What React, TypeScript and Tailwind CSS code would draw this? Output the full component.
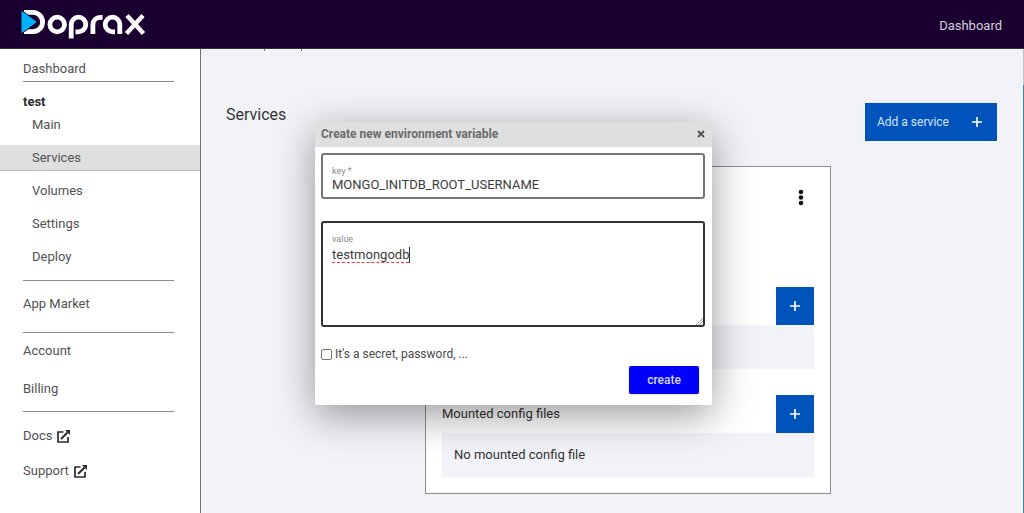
import { useState } from 'react'
import type { ReactNode } from 'react'

interface NavItem {
  label: string
  active?: boolean
}

const projectItems: NavItem[] = [
  { label: 'Main' },
  { label: 'Services', active: true },
  { label: 'Volumes' },
  { label: 'Settings' },
  { label: 'Deploy' },
]

function Logo() {
  return (
    <svg width="126" height="32" viewBox="0 0 126 32" role="img" aria-label="Doprax" className="block">
      <g fill="none" stroke="#fff" strokeWidth="4.800">
        <path d="M3 2.400h9a9.600 9.600 0 0 1 0 19.200H3" />
        <circle cx="36.200" cy="14.500" r="7.300" />
        <path d="M50.200 28.500V14.500a7.300 7.300 0 1 1 7.300 7.300h-3" />
        <path d="M71.900 24V14.500a7.200 7.200 0 0 1 7.200-7.200h2.500" />
        <path d="M94 21.800h-2.500a7.300 7.300 0 1 1 7.300-7.300V24" />
        <path d="M106 5.500l16.500 18M122 5.500l-16.500 18" strokeWidth="4.400" />
      </g>
      <path d="M0 0v24l16.500-12z" fill="#00b2ff" stroke="#1a0030" strokeWidth="1" />
    </svg>
  )
}

function Plus() {
  return (
    <svg width="10" height="10" viewBox="0 0 10 10" aria-hidden="true">
      <path d="M5 0v10M0 5h10" stroke="#fff" strokeWidth="1.600" />
    </svg>
  )
}

function ExternalIcon() {
  return (
    <svg width="13" height="13" viewBox="0 0 13 13" fill="none" stroke="#2b2b2b" aria-hidden="true">
      <path d="M6.500 2H1v10h10V7" strokeWidth="1.700" />
      <path d="M4 9l6.500-6.500" strokeWidth="2" />
      <path d="M8 0h5v5z" fill="#2b2b2b" stroke="none" />
    </svg>
  )
}

function SideLink({ children }: { children: ReactNode }) {
  return (
    <a href="#" className="flex items-center gap-[5px] text-[#525252]">
      {children}
    </a>
  )
}

function AddButton({ label }: { label: string }) {
  return (
    <button type="button" aria-label={label} className="flex size-[38px] items-center justify-center bg-[#0053ba]">
      <Plus />
    </button>
  )
}

function EnvDialog() {
  const [key, setKey] = useState('MONGO_INITDB_ROOT_USERNAME')
  const [value, setValue] = useState('testmongodb')
  const [secret, setSecret] = useState(false)

  return (
    <div
      role="dialog"
      aria-labelledby="env-title"
      className="absolute top-[122px] left-[315px] w-[397px] rounded-xs bg-white pb-[11px] shadow-[0_10px_40px_rgba(0,0,0,0.4)]"
    >
      <div className="flex h-[25px] items-center justify-between bg-[#dfdfdf] pr-[7px] pb-px pl-1.5 font-bold text-[#6b6b6b]">
        <h2 id="env-title" className="text-xs">
          Create new environment variable
        </h2>
        <button type="button" aria-label="Close">
          <svg width="8" height="8" viewBox="0 0 8 8" aria-hidden="true">
            <path d="M1 1l6 6M7 1l-6 6" stroke="#555" strokeWidth="2" />
          </svg>
        </button>
      </div>
      <form className="flex flex-col pt-1.5 pr-[7px] pl-1.5" onSubmit={(e) => e.preventDefault()}>
        <div className="flex h-[46px] flex-col rounded-[3px] border-2 border-[#767676] px-[9px] pt-2.5">
          <label htmlFor="env-key" className="text-[9px] leading-3 text-[#8a8a8a]">
            key *
          </label>
          <input
            id="env-key"
            value={key}
            onChange={(e) => setKey(e.target.value)}
            className="h-4 text-[13px] leading-4 text-[#3c3c3c] outline-none"
          />
        </div>
        <div className="relative mt-[22px] flex h-[106px] flex-col rounded-[3px] border-2 border-[#333] px-[9px] pt-2.5">
          <label htmlFor="env-value" className="text-[9px] leading-3 text-[#8a8a8a]">
            value
          </label>
          <div className="relative grow pt-0.5">
            <textarea
              id="env-value"
              value={value}
              onChange={(e) => setValue(e.target.value)}
              spellCheck={false}
              className="block size-full resize-none text-[13px] leading-4 text-[#3c3c3c] outline-none"
            />
            {/* spelling mark and caret */}
            <span className="pointer-events-none absolute top-0.5 left-0 h-4 w-[77px] border-b border-dashed border-red-500" />
            <span className="pointer-events-none absolute top-0.5 left-[77px] h-4 w-px bg-[#333]" />
          </div>
          <svg width="7" height="7" viewBox="0 0 7 7" className="absolute right-0 bottom-0" aria-hidden="true">
            <path d="M0 7l7-7M3 7l4-4" stroke="#999" />
          </svg>
        </div>
        <label className="mt-[19px] flex items-center gap-[3px] text-xs leading-4 text-[#4a4a4a]">
          <input
            type="checkbox"
            checked={secret}
            onChange={(e) => setSecret(e.target.checked)}
            className="size-[11px] appearance-none rounded-[2px] border border-[#767676] bg-white checked:bg-blue-600"
          />
          It's a secret, password, ...
        </label>
        <button
          type="submit"
          className="mt-1 mr-1.5 h-7 w-[70px] self-end rounded-[2px] bg-[#0000fb] text-xs font-medium text-[#d6d6ff] shadow-sm"
        >
          create
        </button>
      </form>
    </div>
  )
}

export default function App() {
  return (
    <div className="relative flex h-screen flex-col overflow-hidden bg-[#f2f3f8] font-['Roboto',sans-serif] text-[13px] leading-4">
      <header className="flex h-[49px] shrink-0 items-center justify-between border-b border-[#333] bg-[#1a0030] pt-1 pr-[22px] pl-[21px]">
        <a href="#">
          <Logo />
        </a>
        <a href="#" className="text-[#d5cfdb]">
          Dashboard
        </a>
      </header>
      <div className="flex min-h-0 grow">
        <nav className="flex w-[201px] shrink-0 flex-col border-r border-[#6f6f6f] bg-white">
          <div className="mr-[26px] ml-[23px] border-b border-[#8d8d8d] pt-3 pb-1">
            <SideLink>Dashboard</SideLink>
          </div>
          <div className="mt-3 ml-[23px] font-bold text-[#2b2b2b]">test</div>
          <ul className="mt-0.5">
            {projectItems.map((item) => (
              <li key={item.label} className="mb-2">
                <a
                  href="#"
                  className={`flex h-[25px] items-center pl-8 text-[#525252] ${
                    item.active ? 'bg-[#dfdfdf] shadow-[0_1px_0_#b8b8b8]' : ''
                  }`}
                >
                  {item.label}
                </a>
              </li>
            ))}
          </ul>
          <div className="mt-[3px] mr-[26px] ml-[23px] flex flex-col">
            <div className="border-y border-[#8d8d8d] pt-[15px] pb-5">
              <SideLink>App Market</SideLink>
            </div>
            <div className="flex flex-col gap-[22px] border-b border-[#8d8d8d] pt-2.5 pb-3.5">
              <SideLink>Account</SideLink>
              <SideLink>Billing</SideLink>
            </div>
            <div className="flex flex-col gap-[19px] pt-4">
              <SideLink>
                Docs <ExternalIcon />
              </SideLink>
              <SideLink>
                Support <ExternalIcon />
              </SideLink>
            </div>
          </div>
        </nav>
        <main className="flex min-w-0 grow flex-col pr-[26px] pl-[25px]">
          {/* tail of the line scrolled under the header */}
          <div className="flex h-0.5 gap-9 pl-[38px]" aria-hidden="true">
            <span className="h-0.5 w-px bg-[#777]" />
            <span className="h-0.5 w-px bg-[#777]" />
          </div>
          <div className="mt-[52px] flex items-start justify-between">
            <h1 className="mt-0.5 text-base leading-5 text-[#333]">Services</h1>
            <button
              type="button"
              className="flex h-[38px] w-[132px] items-center justify-between bg-[#0053ba] pr-[15px] pl-3 text-xs text-[#d4e4f7]"
            >
              Add a service
              <Plus />
            </button>
          </div>
          <section className="mt-[25px] mr-[166px] ml-[199px] flex h-[328px] flex-col border border-[#8d8d8d] bg-white px-4">
            <button type="button" aria-label="Service menu" className="mt-[22px] mr-2.5 self-end">
              <svg width="6" height="17" viewBox="0 0 6 17" fill="#161616" aria-hidden="true">
                <circle cx="3" cy="3" r="2.300" />
                <circle cx="3" cy="8.500" r="2.300" />
                <circle cx="3" cy="14" r="2.300" />
              </svg>
            </button>
            <div className="mt-[81px] flex items-center justify-end">
              <AddButton label="Add environment variable" />
            </div>
            <div className="h-11 bg-[#f2f3f8]" />
            <div className="mt-[26px] flex items-center justify-between">
              <h2 className="text-[#333]">Mounted config files</h2>
              <AddButton label="Mount config file" />
            </div>
            <p className="flex h-11 items-center bg-[#f2f3f8] px-3 text-[#333]">No mounted config file</p>
          </section>
        </main>
        {/* scroll position strip */}
        <div className="flex w-px shrink-0 flex-col bg-[#3d7fb5]">
          <div className="h-9 bg-[#c4c4c6]" />
        </div>
      </div>
      <EnvDialog />
    </div>
  )
}
